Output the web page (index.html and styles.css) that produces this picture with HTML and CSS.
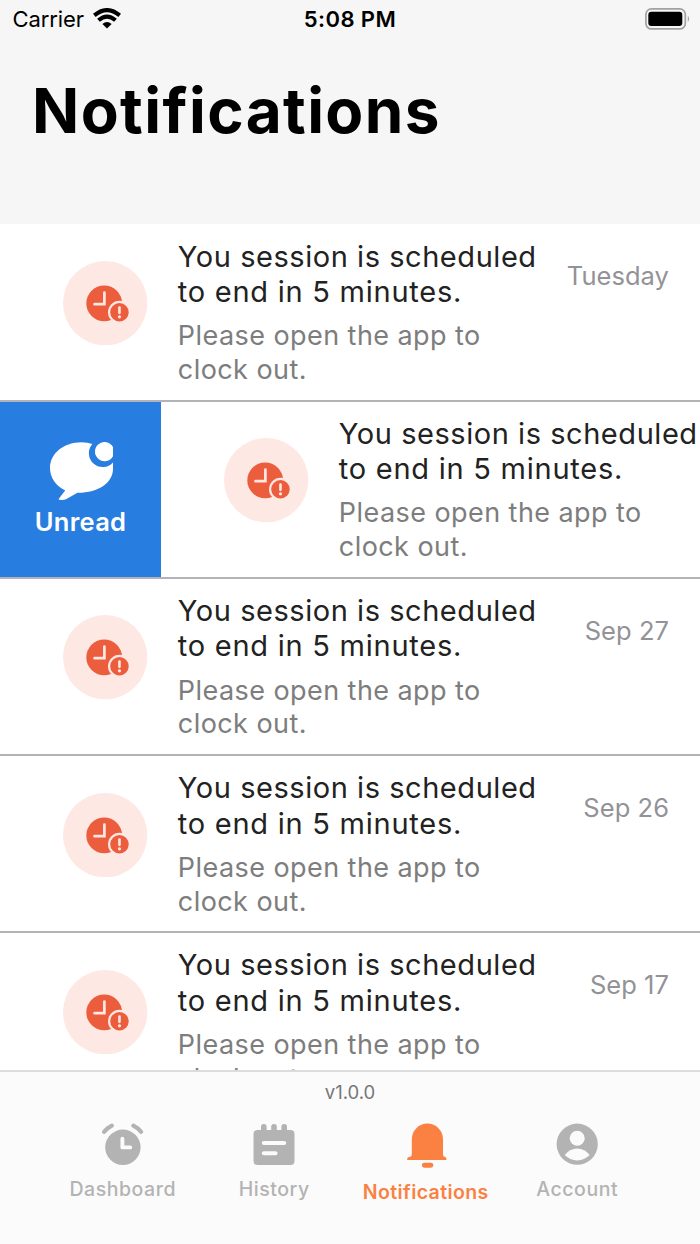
FILE: index.html
```html
<!DOCTYPE html>
<html lang="en">
<head>
<meta charset="utf-8">
<title>Notifications</title>
<link rel="stylesheet" href="styles.css">
</head>
<body>
<svg class="defs" width="0" height="0" aria-hidden="true">
  <symbol id="session" viewBox="0 0 84 84">
    <circle cx="42" cy="42" r="42" fill="#fee8e3"/>
    <circle cx="41" cy="42.2" r="17.8" fill="#ec5d3e"/>
    <path d="M41.2 31.4V43H31.4" fill="none" stroke="#fee8e3" stroke-width="2.7" stroke-linecap="round"/>
    <circle cx="56.2" cy="51" r="11.4" fill="#fee8e3"/>
    <circle cx="56.2" cy="51" r="9.2" fill="#ec5d3e"/>
    <path d="M56.2 46.4V51.6" stroke="#fee8e3" stroke-width="2.6" stroke-linecap="round"/>
    <circle cx="56.2" cy="55.6" r="1.6" fill="#fee8e3"/>
  </symbol>
</svg>
<div class="screen">
  <header class="header">
    <div class="status">
      <div class="status-left"><span class="carrier">Carrier</span>
        <svg class="wifi" viewBox="0 0 28 21">
          <g fill="none" stroke="#000" stroke-width="4.1">
            <path d="M1.3 7.4Q14 -3.2 26.7 7.4"/>
            <path d="M5.5 12.3Q14 4.8 22.5 12.3"/>
          </g>
          <path d="M9.4 16Q14 12.2 18.6 16L14 20.6Z"/>
        </svg>
      </div>
      <span class="time">5:08 PM</span>
      <svg class="battery" viewBox="0 0 45 22">
        <rect x=".9" y=".9" width="39.4" height="20" rx="5.5" fill="none" stroke="#a1a1a1" stroke-width="1.7"/>
        <rect x="3.3" y="3.7" width="34" height="14.2" rx="3" fill="#000"/>
        <path d="M42.8 7.4Q45.4 10.8 42.8 14.2Z" fill="#a1a1a1"/>
      </svg>
    </div>
    <h1 class="title">Notifications</h1>
  </header>
  <main class="list">
    <article class="row">
      <svg class="avatar"><use href="#session"/></svg>
      <div class="body"><h2 class="subject">You session is scheduled<br><span class="wide">to end in 5 minutes.</span></h2><p class="detail">Please open the app to<br>clock out.</p></div>
      <time class="date">Tuesday</time>
    </article>
    <article class="row swiped">
      <div class="action">
        <svg class="bubble" viewBox="0 0 63 58">
          <path fill="#fff" d="M42.4 2.1A13 13 0 0 0 63 20.5V27C63 40.5 48.5 51 27.5 50.8L16 57.2Q13.5 58.3 9.3 57.8Q8.2 57.6 9 56.4L15.2 48.4C5.5 43.5 0 35.5 0 26C0 11.3 14 .3 31.5 .3Q37.5 .3 42.4 2.1Z"/>
          <path fill="#fff" d="M63 5V14.2A9.6 9.6 0 1 1 63 5Z"/>
        </svg>
        <span class="action-label">Unread</span>
      </div>
      <svg class="avatar"><use href="#session"/></svg>
      <div class="body"><h2 class="subject">You session is scheduled<br><span class="wide">to end in 5 minutes.</span></h2><p class="detail">Please open the app to<br>clock out.</p></div>
    </article>
    <article class="row">
      <svg class="avatar"><use href="#session"/></svg>
      <div class="body"><h2 class="subject">You session is scheduled<br><span class="wide">to end in 5 minutes.</span></h2><p class="detail">Please open the app to<br>clock out.</p></div>
      <time class="date">Sep 27</time>
    </article>
    <article class="row">
      <svg class="avatar"><use href="#session"/></svg>
      <div class="body"><h2 class="subject">You session is scheduled<br><span class="wide">to end in 5 minutes.</span></h2><p class="detail">Please open the app to<br>clock out.</p></div>
      <time class="date">Sep 26</time>
    </article>
    <article class="row">
      <svg class="avatar"><use href="#session"/></svg>
      <div class="body"><h2 class="subject">You session is scheduled<br><span class="wide">to end in 5 minutes.</span></h2><p class="detail">Please open the app to<br>clock out.</p></div>
      <time class="date">Sep 17</time>
    </article>
  </main>
  <footer class="footer">
    <div class="version">v1.0.0</div>
    <nav class="tabs">
      <a class="tab">
        <svg class="icon" viewBox="0 0 42 46">
          <circle cx="20.9" cy="24.3" r="17.7" fill="#b3b3b3"/>
          <path d="M2.2 8.8Q5.1 5 9.8 2.6M39 8.8Q36.1 5 31.4 2.6" fill="none" stroke="#b3b3b3" stroke-width="4.2" stroke-linecap="round"/>
          <path d="M20.4 15.8V24.4H28.2" fill="none" stroke="#fbfbfb" stroke-width="3.9" stroke-linecap="round" stroke-linejoin="round"/>
        </svg><span class="tab-label">Dashboard</span></a>
      <a class="tab">
        <svg class="icon" viewBox="0 0 42 46">
          <rect x=".5" y="7" width="41" height="35" rx="4" fill="#b3b3b3"/>
          <path d="M10.8 3.7V10M21 3.7V10M31.2 3.7V10" stroke="#b3b3b3" stroke-width="5.6" stroke-linecap="round"/>
          <path d="M10.8 20H31.2M10.8 30.2H22.6" stroke="#fbfbfb" stroke-width="4" stroke-linecap="round"/>
        </svg><span class="tab-label">History</span></a>
      <a class="tab active">
        <svg class="icon" viewBox="0 0 42 46">
          <path fill="#fa8142" d="M6.8 16.2A15.6 15.6 0 0 1 38 16.2V31.6Q38 34 40 34Q41.4 34 41.4 36V37H2.2V36Q2.2 34 4.2 34Q6.8 34 6.8 31.6Z"/>
          <rect x="16.9" y="39.7" width="11.4" height="5" rx="2.4" fill="#fa8142"/>
        </svg><span class="tab-label">Notifications</span></a>
      <a class="tab">
        <svg class="icon" viewBox="0 0 42 46">
          <circle cx="21.2" cy="21.2" r="20.6" fill="#b3b3b3"/>
          <circle cx="21.2" cy="15.2" r="7.5" fill="#fbfbfb"/>
          <path d="M8.7 32.1Q13.8 25.5 21.2 25.5T33.7 32.1Q28.4 37.4 21.2 37.4T8.7 32.1Z" fill="#fbfbfb"/>
        </svg><span class="tab-label">Account</span></a>
    </nav>
  </footer>
</div>
</body>
</html>
```
FILE: styles.css
```css
* { box-sizing: border-box; }
body { margin: 0; font-family: Inter, "Liberation Sans", sans-serif; color: #000; }
h1, h2, p { margin: 0; }
svg { display: block; flex: none; }
.defs { position: absolute; }
.screen { width: 700px; height: 1244px; display: flex; flex-direction: column; overflow: hidden; background: #fff; }
.header { height: 224px; flex: none; background: #f6f6f6; }
.status { height: 38px; padding: 0 10.5px 0 12.5px; display: grid; grid-template-columns: 1fr auto 1fr; align-items: center; font-size: 22px; line-height: 38px; }
.status-left { display: flex; align-items: center; gap: 9px; }
.carrier { letter-spacing: -0.1px; }
.wifi { width: 28px; height: 21px; margin-top: -1px; }
.time { font-weight: 600; letter-spacing: 0.4px; margin-left: -2px; }
.battery { width: 45px; height: 22px; justify-self: end; margin-top: -1px; }
.title { padding: 35px 0 0 32px; font-size: 62px; line-height: 75px; font-weight: 700; letter-spacing: 1.4px; }
.list { height: 846px; flex: none; overflow: hidden; padding-top: 0.6px; }
.row { height: 177.2px; display: flex; align-items: flex-start; padding-left: 63.4px; border-bottom: 2px solid #b2b2b7; overflow: hidden; }
.avatar { width: 84.4px; height: 84.4px; margin: 36.5px 30px 0 0; }
.body { flex: none; padding-top: 14px; white-space: nowrap; }
.subject { font-size: 29px; line-height: 35.5px; font-weight: 430; letter-spacing: 0.55px; color: #222; }
.wide { letter-spacing: 0.75px; }
.detail { margin-top: 9.6px; font-size: 27px; line-height: 33.8px; letter-spacing: 0.44px; color: #7d7d7d; }
.date { margin: 35.8px 31px 0 auto; font-size: 25.5px; line-height: 31px; letter-spacing: 0.05px; color: #929297; }
.swiped { padding-left: 0; }
.action { width: 161px; height: 177px; margin-right: 63.4px; flex: none; background: #287de1; color: #fff; display: flex; flex-direction: column; align-items: center; padding-top: 40.5px; }
.bubble { width: 63px; height: 58px; margin-left: 2px; }
.action-label { margin-top: 6px; font-size: 25.5px; line-height: 32px; font-weight: 600; letter-spacing: 0.3px; }
.footer { height: 174px; flex: none; background: #fbfbfb; border-top: 2px solid #dcdcdc; }
.version { padding-top: 8px; height: 33px; text-align: center; font-size: 18.5px; line-height: 24px; color: #777; }
.tabs { display: grid; grid-template-columns: repeat(4, 1fr); padding: 18px 47px 0; }
.tab { display: flex; flex-direction: column; align-items: center; color: #b3b3b3; }
.icon { width: 42px; height: 46px; }
.tab-label { margin-top: 8px; font-size: 19.5px; line-height: 24px; font-weight: 500; letter-spacing: 0.55px; }
.active { color: #fa8142; }
.active .tab-label { margin-top: 11px; font-weight: 600; letter-spacing: 0.4px; }
```
